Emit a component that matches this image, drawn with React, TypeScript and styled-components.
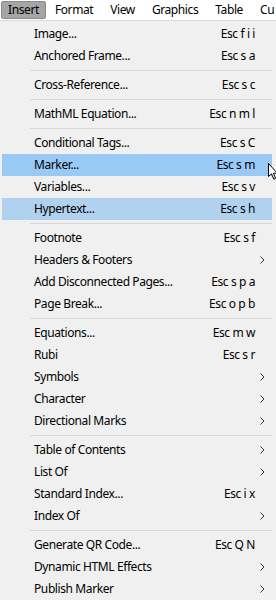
import styled, { createGlobalStyle } from "styled-components";

const Global = createGlobalStyle`
  html, body {
    margin: 0;
    padding: 0;
    background: #f0f0f0;
    font-family: "Noto Sans", "Open Sans", sans-serif;
    font-size: 12px;
    letter-spacing: -0.4px;
    color: #000;
  }
`;

type Item =
  | { kind: "item"; label: string; shortcut?: string; sub?: boolean; state?: "hover" | "selected" }
  | { kind: "sep" };

const items: Item[] = [
  { kind: "item", label: "Image...", shortcut: "Esc f i i" },
  { kind: "item", label: "Anchored Frame...", shortcut: "Esc s a" },
  { kind: "sep" },
  { kind: "item", label: "Cross-Reference...", shortcut: "Esc s c" },
  { kind: "sep" },
  { kind: "item", label: "MathML Equation...", shortcut: "Esc n m l" },
  { kind: "sep" },
  { kind: "item", label: "Conditional Tags...", shortcut: "Esc s C" },
  { kind: "item", label: "Marker...", shortcut: "Esc s m", state: "hover" },
  { kind: "item", label: "Variables...", shortcut: "Esc s v" },
  { kind: "item", label: "Hypertext...", shortcut: "Esc s h", state: "selected" },
  { kind: "sep" },
  { kind: "item", label: "Footnote", shortcut: "Esc s f" },
  { kind: "item", label: "Headers & Footers", sub: true },
  { kind: "item", label: "Add Disconnected Pages...", shortcut: "Esc s p a" },
  { kind: "item", label: "Page Break...", shortcut: "Esc o p b" },
  { kind: "sep" },
  { kind: "item", label: "Equations...", shortcut: "Esc m w" },
  { kind: "item", label: "Rubi", shortcut: "Esc s r" },
  { kind: "item", label: "Symbols", sub: true },
  { kind: "item", label: "Character", sub: true },
  { kind: "item", label: "Directional Marks", sub: true },
  { kind: "sep" },
  { kind: "item", label: "Table of Contents", sub: true },
  { kind: "item", label: "List Of", sub: true },
  { kind: "item", label: "Standard Index...", shortcut: "Esc i x" },
  { kind: "item", label: "Index Of", sub: true },
  { kind: "sep" },
  { kind: "item", label: "Generate QR Code...", shortcut: "Esc Q N" },
  { kind: "item", label: "Dynamic HTML Effects", sub: true },
  { kind: "item", label: "Publish Marker", sub: true },
];

const menus = ["Insert", "Format", "View", "Graphics", "Table", "Cu"];

export default function App() {
  return (
    <Screen>
      <Global />
      <MenuBar>
        {menus.map((m, i) => (
          <BarItem key={m} $open={i === 0}>
            {m}
          </BarItem>
        ))}
      </MenuBar>
      <Dropdown>
        {items.map((it, i) =>
          it.kind === "sep" ? (
            <Separator key={i} />
          ) : (
            <Row key={i} $state={it.state}>
              <Label>{it.label}</Label>
              <Shortcut>{it.shortcut}</Shortcut>
              <Arrow>
                {it.sub && (
                  <svg width="5" height="8" viewBox="0 0 5 8">
                    <path d="M0.5 0.5 L4 4 L0.5 7.5" fill="none" stroke="#333" strokeWidth="1" />
                  </svg>
                )}
              </Arrow>
            </Row>
          )
        )}
      </Dropdown>
      <Cursor width="10" height="18" viewBox="0 0 10 18">
        <path
          d="M0.5 0.5 L0.5 13.5 L3.5 10.8 L5.8 16.2 L7.6 15.4 L5.4 10.2 L9.3 10.2 Z"
          fill="#fff"
          stroke="#000"
          strokeWidth="1"
          strokeLinejoin="miter"
        />
      </Cursor>
    </Screen>
  );
}

const Screen = styled.div`
  position: relative;
  width: 276px;
  height: 600px;
  overflow: hidden;
  background: #f0f0f0;
`;

const MenuBar = styled.div`
  display: flex;
  align-items: stretch;
  height: 21px;
  padding: 1px 0 0 1px;
  box-sizing: border-box;
  background: #fff;
  border-bottom: 1px solid #d9d9d9;
  white-space: nowrap;
`;

const BarItem = styled.div<{ $open?: boolean }>`
  display: flex;
  align-items: center;
  height: 18px;
  padding: 0 ${(p) => (p.$open ? "6px" : "7.5px")};
  margin-right: ${(p) => (p.$open ? "0.5px" : "0")};
  line-height: 18px;
  background: ${(p) => (p.$open ? "#a5a5a5" : "transparent")};
  border: 1px solid ${(p) => (p.$open ? "#8c8c8c" : "transparent")};
  border-radius: 2px;
  box-sizing: border-box;
`;

const Dropdown = styled.div`
  display: flex;
  flex-direction: column;
  padding: 2px 4px 0 2px;
`;

const Row = styled.div<{ $state?: "hover" | "selected" }>`
  display: grid;
  grid-template-columns: 1fr auto 17px;
  align-items: center;
  height: 22px;
  padding-left: 32px;
  padding-right: 0;
  background: ${(p) =>
    p.$state === "hover" ? "#99c9f5" : p.$state === "selected" ? "#b0d2ee" : "transparent"};
  white-space: nowrap;
`;

const Label = styled.span`
  line-height: 22px;
`;

const Shortcut = styled.span`
  line-height: 22px;
`;

const Arrow = styled.span`
  display: flex;
  align-items: center;
  justify-content: center;
  padding-right: 2px;
`;

const Separator = styled.div`
  height: 7px;
  margin-left: 28px;
  display: flex;
  align-items: center;
  &::after {
    content: "";
    flex: 1;
    height: 1px;
    background: #d7d7d7;
  }
`;

const Cursor = styled.svg`
  position: absolute;
  left: 268px;
  top: 163px;
`;
